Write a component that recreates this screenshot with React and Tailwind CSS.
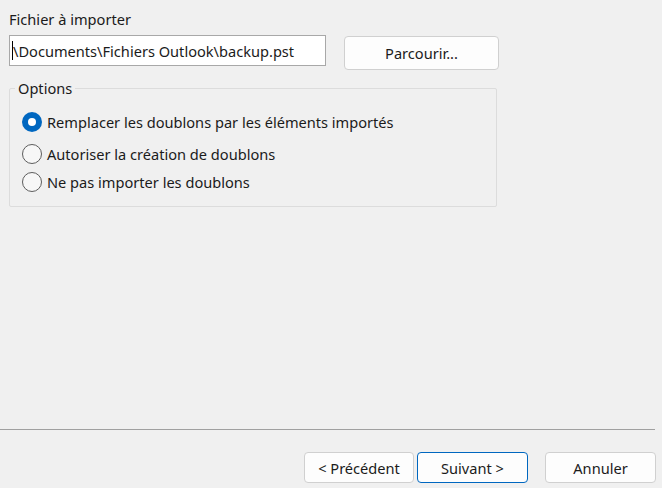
import { useState } from "react";

const OPTIONS = [
  { id: "replace", label: "Remplacer les doublons par les éléments importés", className: "mt-[10px]" },
  { id: "allow", label: "Autoriser la création de doublons", className: "mt-[4px]" },
  { id: "skip", label: "Ne pas importer les doublons", className: "" },
];

export default function App() {
  const [choice, setChoice] = useState("replace");

  return (
    <div className="flex h-[488px] w-[662px] flex-col bg-[#f0f0f0] text-[14.6px] leading-5 text-[#1b1b1b] [font-family:'Noto_Sans','Open_Sans',sans-serif]">
      <div className="pl-[9px] pt-[9px]">Fichier à importer</div>

      <div className="mt-[6px] flex items-start pl-[9px]">
        <div className="flex h-[31px] w-[317px] items-center overflow-hidden border border-[#a8a8a8] bg-white pl-[2px]">
          <span className="h-[19px] w-px shrink-0 bg-black" />
          <span className="whitespace-nowrap">\Documents\Fichiers Outlook\backup.pst</span>
        </div>
        <WinButton className="ml-[18px] mt-px h-[34px] w-[155px]">Parcourir...</WinButton>
      </div>

      <fieldset className="ml-[9px] mt-[8px] w-[488px] rounded-[2px] border border-[#dcdcdc] pb-[10px] pl-[5px]">
        <legend className="px-[3px]">Options</legend>
        <div className="ml-[7px] flex flex-col">
          {OPTIONS.map((opt) => (
            <Radio
              key={opt.id}
              className={opt.className}
              label={opt.label}
              checked={choice === opt.id}
              onClick={() => setChoice(opt.id)}
            />
          ))}
        </div>
      </fieldset>

      <div className="flex-1" />

      <div className="h-px w-[655px] bg-[#a0a0a0]" />

      <div className="mb-[5px] mt-[22px] flex justify-end pr-[6px]">
        <WinButton className="h-[31px] w-[110px]">&lt; Précédent</WinButton>
        <WinButton className="ml-[3px] h-[31px] w-[111px]" primary>
          Suivant &gt;
        </WinButton>
        <WinButton className="ml-[17px] h-[31px] w-[111px]">Annuler</WinButton>
      </div>
    </div>
  );
}

function WinButton({ children, className = "", primary }) {
  return (
    <button
      type="button"
      className={`flex items-center justify-center rounded-[4px] border bg-[#fdfdfd] ${
        primary ? "border-[#0067c0]" : "border-[#d0d0d0]"
      } ${className}`}
    >
      {children}
    </button>
  );
}

function Radio({ label, checked, onClick, className }) {
  return (
    <button type="button" onClick={onClick} className={`flex h-[28px] items-center text-left ${className}`}>
      {checked ? (
        <span className="flex h-5 w-5 shrink-0 items-center justify-center rounded-full bg-[#0067c0]">
          <span className="h-[8px] w-[8px] rounded-full bg-white" />
        </span>
      ) : (
        <span className="h-5 w-5 shrink-0 rounded-full border border-[#5d5d5d] bg-[#f7f7f7]" />
      )}
      <span className="ml-[5px] whitespace-nowrap">{label}</span>
    </button>
  );
}
